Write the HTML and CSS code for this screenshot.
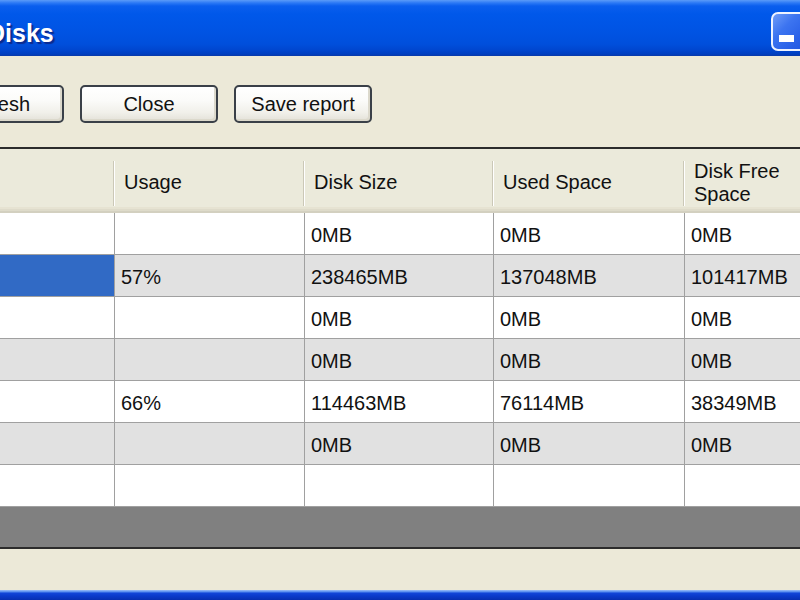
FILE: index.html
```html
<!DOCTYPE html>
<html>
<head>
<meta charset="utf-8">
<title>Disks</title>
<link rel="stylesheet" href="styles.css">
</head>
<body>
<div class="window">
  <div class="titlebar">
    <div class="title">Disks</div>
    <div class="minbtn"><span class="dash"></span></div>
  </div>
  <div class="client">
    <div class="toolbar">
      <button class="btn">Refresh</button>
      <button class="btn">Close</button>
      <button class="btn">Save report</button>
    </div>
    <div class="grid">
      <div class="row head">
        <div class="hcell"></div>
        <div class="hcell">Usage</div>
        <div class="hcell">Disk Size</div>
        <div class="hcell">Used Space</div>
        <div class="hcell">Disk Free<br>Space</div>
      </div>
      <div class="row">
        <div class="cell"></div><div class="cell"></div><div class="cell">0MB</div><div class="cell">0MB</div><div class="cell">0MB</div>
      </div>
      <div class="row alt">
        <div class="cell sel"></div><div class="cell">57%</div><div class="cell">238465MB</div><div class="cell">137048MB</div><div class="cell">101417MB</div>
      </div>
      <div class="row">
        <div class="cell"></div><div class="cell"></div><div class="cell">0MB</div><div class="cell">0MB</div><div class="cell">0MB</div>
      </div>
      <div class="row alt">
        <div class="cell"></div><div class="cell"></div><div class="cell">0MB</div><div class="cell">0MB</div><div class="cell">0MB</div>
      </div>
      <div class="row">
        <div class="cell"></div><div class="cell">66%</div><div class="cell">114463MB</div><div class="cell">76114MB</div><div class="cell">38349MB</div>
      </div>
      <div class="row alt">
        <div class="cell"></div><div class="cell"></div><div class="cell">0MB</div><div class="cell">0MB</div><div class="cell">0MB</div>
      </div>
      <div class="row">
        <div class="cell"></div><div class="cell"></div><div class="cell"></div><div class="cell"></div><div class="cell"></div>
      </div>
    </div>
  </div>
  <div class="frame-bottom"></div>
</div>
</body>
</html>
```

FILE: styles.css
```css
html, body {
  margin: 0;
  padding: 0;
}

body {
  width: 800px;
  height: 600px;
  overflow: hidden;
  font-family: "Liberation Sans", Arial, sans-serif;
  font-size: 20px;
  color: #111;
  background: #ece9d8;
}

.window {
  display: flex;
  flex-direction: column;
  height: 600px;
}

.titlebar {
  flex: none;
  height: 56px;
  display: flex;
  justify-content: space-between;
  align-items: flex-start;
  overflow: hidden;
  background: linear-gradient(to bottom,
    #5b9bf8 0px, #2a78f5 3px, #0a5eee 6px, #0058ea 14px,
    #0054e4 30px, #004fdc 44px, #0046cf 50px, #003fc0 54px, #0a3aa8 56px);
}

.title {
  margin-left: -13px;
  padding-top: 18px;
  font-size: 25px;
  line-height: 30px;
  font-weight: bold;
  color: #fff;
  text-shadow: 2px 2px 1px #0b2a8e;
}

.minbtn {
  flex: none;
  width: 40px;
  height: 39px;
  margin-top: 12px;
  margin-right: -11px;
  box-sizing: border-box;
  border: 2px solid #eef3ff;
  border-radius: 7px;
  padding: 21px 0 0 6px;
  background: linear-gradient(135deg, #6e9cf8 0%, #3c74f0 35%, #2a61e8 70%, #1f55dc 100%);
}

.dash {
  display: block;
  width: 15px;
  height: 7px;
  background: #fff;
}

.client {
  flex: 1;
  display: flex;
  flex-direction: column;
  overflow: hidden;
  background: #ece9d8;
}

.toolbar {
  display: flex;
  gap: 16px;
  padding-top: 29px;
  margin-left: -74px;
}

.btn {
  flex: none;
  width: 138px;
  height: 38px;
  box-sizing: border-box;
  border: 2px solid #3a4048;
  border-radius: 5px;
  padding: 0;
  font-family: inherit;
  font-size: 20px;
  color: #111;
  background: linear-gradient(to bottom, #ffffff 0%, #fbfbf9 40%, #f1f0ea 75%, #e3e1d8 100%);
  box-shadow: inset -2px -2px 0 #dcd9cc;
}

.grid {
  flex: none;
  margin-top: 24px;
  margin-left: -80px;
  width: 980px;
  height: 402px;
  box-sizing: border-box;
  border-top: 2px solid #2c2c2c;
  border-bottom: 2px solid #2c2c2c;
  background: #808080;
}

.row {
  display: grid;
  grid-template-columns: 195px 190px 189px 191px 1fr;
}

.head {
  height: 64px;
}

.hcell {
  display: flex;
  align-items: center;
  padding-left: 9px;
  padding-top: 3px;
  line-height: 23px;
  background:
    linear-gradient(#cbc8b7, #cbc8b7) no-repeat right 1px top 12px / 1px 45px,
    linear-gradient(#ffffff, #ffffff) no-repeat right 0 top 12px / 1px 45px,
    linear-gradient(to bottom, #ebeadb 0, #ebeadb 58px, #e6e3d2 58px, #e6e3d2 60px, #dedbca 60px, #dedbca 62px, #d3d0c0 62px, #d3d0c0 64px);
}

.cell {
  height: 42px;
  box-sizing: border-box;
  display: flex;
  align-items: center;
  padding-left: 6px;
  padding-top: 4px;
  border-right: 1px solid #a0a0a0;
  border-bottom: 1px solid #a0a0a0;
  background: #ffffff;
  white-space: nowrap;
}

.row.alt .cell {
  background: #e1e1e1;
}

.row .cell.sel {
  background: #316ac5;
}

.frame-bottom {
  flex: none;
  height: 10px;
  background: linear-gradient(to bottom, #9cc0f8 0px, #4f86ee 2px, #1246d8 3px, #0a3acb 6px, #072fb0 10px);
}
```
